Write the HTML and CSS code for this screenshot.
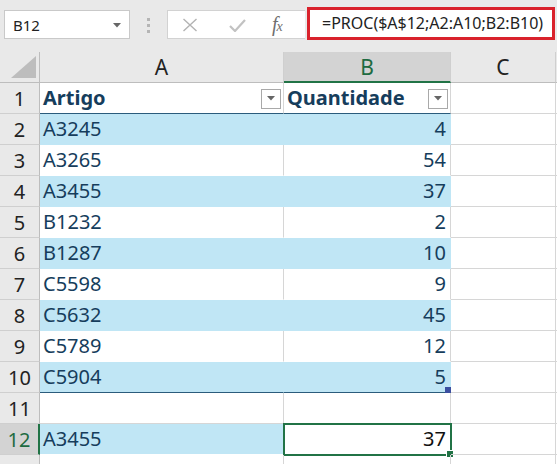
FILE: index.html
```html
<!DOCTYPE html>
<html>
<head>
<meta charset="utf-8">
<link rel="stylesheet" href="styles.css">
</head>
<body>
<div class="toolbar">
  <div class="namebox"><span>B12</span><svg class="nb-arrow" width="8" height="5" viewBox="0 0 8 5"><path d="M0 0h8L4 4.5z" fill="#666"/></svg></div>
  <div class="dots"><i></i><i></i><i></i></div>
  <div class="fxbox">
    <svg class="ic-x" width="16" height="14" viewBox="0 0 16 14"><path d="M1.5 1l13 12M14.5 1l-13 12" stroke="#b3b3b3" stroke-width="1.4" fill="none"/></svg>
    <svg class="ic-ok" width="17" height="13" viewBox="0 0 17 13"><path d="M1 7l5 5L16 1" stroke="#c2c2c2" stroke-width="2.2" fill="none"/></svg>
    <span class="ic-fx">f<span class="fx-x">x</span></span>
  </div>
  <div class="formula">=PROC($A$12;A2:A10;B2:B10)</div>
</div>
<div class="sheet">
  <div class="corner"><svg width="26" height="23" viewBox="0 0 26 23"><path d="M25 0V22H0z" fill="#bdbdbd"/></svg></div>
  <div class="colh">A</div>
  <div class="colh sel">B</div>
  <div class="colh">C</div>
  <div class="colh last"></div>

  <div class="rowh">1</div>
  <div class="cell t th tA">Artigo<span class="dd"><svg width="8" height="5" viewBox="0 0 8 5"><path d="M0 0h8L4 4.5z" fill="#666"/></svg></span></div>
  <div class="cell t th">Quantidade<span class="dd"><svg width="8" height="5" viewBox="0 0 8 5"><path d="M0 0h8L4 4.5z" fill="#666"/></svg></span></div>
  <div class="cell c"></div><div class="cell e"></div>

  <div class="rowh">2</div><div class="cell t b">A3245</div><div class="cell t b n">4</div><div class="cell c"></div><div class="cell e"></div>
  <div class="rowh">3</div><div class="cell t w tA">A3265</div><div class="cell t w n">54</div><div class="cell c"></div><div class="cell e"></div>
  <div class="rowh">4</div><div class="cell t b">A3455</div><div class="cell t b n">37</div><div class="cell c"></div><div class="cell e"></div>
  <div class="rowh">5</div><div class="cell t w tA">B1232</div><div class="cell t w n">2</div><div class="cell c"></div><div class="cell e"></div>
  <div class="rowh">6</div><div class="cell t b">B1287</div><div class="cell t b n">10</div><div class="cell c"></div><div class="cell e"></div>
  <div class="rowh">7</div><div class="cell t w tA">C5598</div><div class="cell t w n">9</div><div class="cell c"></div><div class="cell e"></div>
  <div class="rowh">8</div><div class="cell t b">C5632</div><div class="cell t b n">45</div><div class="cell c"></div><div class="cell e"></div>
  <div class="rowh">9</div><div class="cell t w tA">C5789</div><div class="cell t w n">12</div><div class="cell c"></div><div class="cell e"></div>
  <div class="rowh">10</div><div class="cell t b end">C5904</div><div class="cell t b n end handle">5</div><div class="cell c"></div><div class="cell e"></div>

  <div class="rowh">11</div><div class="cell"></div><div class="cell"></div><div class="cell c"></div><div class="cell e"></div>
  <div class="rowh selr">12</div><div class="cell blue12">A3455</div><div class="cell n active">37</div><div class="cell c"></div><div class="cell e"></div>
  <div class="rowh">13</div><div class="cell"></div><div class="cell"></div><div class="cell c"></div><div class="cell e"></div>
</div>
</body>
</html>
```

FILE: styles.css
```css
* { box-sizing: border-box; }
html, body { margin: 0; padding: 0; background: #fff; overflow: hidden; }
body { width: 557px; height: 464px; font-family: "Noto Sans", "Open Sans", sans-serif; }

.toolbar {
  height: 52px;
  background: #e9e9e9;
  display: flex;
  align-items: flex-start;
}
.namebox {
  margin: 10px 0 0 4px;
  width: 126px;
  height: 29px;
  background: #fff;
  border: 1px solid #c9c9c9;
  display: flex;
  align-items: center;
  justify-content: space-between;
  padding: 0 8px 0 8px;
  font-size: 15px;
  color: #222;
}
.nb-arrow { margin-top: 1px; }
.dots {
  margin: 18px 0 0 17px;
  width: 3px;
  display: flex;
  flex-direction: column;
  gap: 3px;
}
.dots i { display: block; width: 3px; height: 3px; background: #b5b5b5; }
.fxbox {
  margin: 10px 0 0 17px;
  width: 138px;
  height: 29px;
  background: #fff;
  border: 1px solid #d2d2d2;
  border-right: none;
  display: flex;
  align-items: center;
  padding-left: 14px;
}
.ic-x { margin-right: 31px; }
.ic-ok { margin-right: 26px; margin-top: 2px; }
.ic-fx {
  font-family: "Liberation Serif", serif;
  font-style: italic;
  font-size: 20px;
  color: #6f6f6f;
  letter-spacing: -1px;
}
.fx-x { font-size: 14px; }
.formula {
  margin: 7px 0 0 2px;
  width: 248px;
  height: 33px;
  background: #fff;
  border: 3px solid #d9222c;
  padding-left: 12px;
  font-size: 16px;
  line-height: 26px;
  color: #222;
  white-space: nowrap;
}

.sheet {
  display: grid;
  grid-template-columns: 40px 244px 167px 105px 1fr;
  grid-auto-rows: 31px;
}
.corner, .colh, .rowh {
  background: #e9e9e9;
  color: #222;
  font-size: 20px;
  display: flex;
  align-items: center;
  justify-content: center;
}
.corner {
  border-right: 1px solid #bdbdbd;
  border-bottom: 1px solid #bdbdbd;
  align-items: flex-end;
  justify-content: flex-end;
  padding: 0 2px 3px 0;
}
.colh {
  border-right: 1px solid #cfcfcf;
  border-bottom: 1px solid #bdbdbd;
  font-size: 21px;
}
.colh.sel {
  background: #d3d3d3;
  color: #1e6b41;
  border-bottom: 2px solid #217346;
}
.colh.last { border-right: none; }
.rowh {
  border-right: 1px solid #bdbdbd;
  border-bottom: 1px solid #cfcfcf;
  font-size: 20px;
}
.rowh.selr {
  background: #d3d3d3;
  color: #1e6b41;
  border-right: 2px solid #217346;
}

.cell {
  position: relative;
  border-right: 1px solid #d6d6d6;
  border-bottom: 1px solid #d6d6d6;
  font-size: 20px;
  line-height: 30px;
  padding: 0 4px 0 3px;
  color: #111;
  white-space: nowrap;
}
.cell.e { border-right: none; }
.cell.n { text-align: right; }
.cell.t { color: #163d5c; border-bottom-color: transparent; }
.cell.t.b { background: #c0e6f5; border-right-color: #c0e6f5; border-bottom-color: #c0e6f5; }
.cell.t.w { background: #fff; border-bottom-color: #fff; }
.cell.th {
  font-weight: 700;
  border-bottom: 1px solid #2b5c7c;
  display: flex;
  align-items: center;
  justify-content: space-between;
  padding-right: 2px;
}
.cell.th.tA { border-right-color: #d6d6d6; }
.cell.th:not(.tA) { border-right-color: #d6d6d6; }
.cell.t.end { border-bottom: 1px solid #2b5c7c; }
.dd {
  width: 20px;
  height: 20px;
  border: 1px solid #a9a9a9;
  background: #fff;
  display: flex;
  align-items: center;
  justify-content: center;
  margin-top: 1px;
}
.handle::after {
  content: "";
  position: absolute;
  right: -1px;
  bottom: -1px;
  width: 6px;
  height: 6px;
  background: #3b4fa0;
}
.cell.blue12 { background: #c0e6f5; color: #163d5c; border-right: none; border-bottom-color: #fff; }
.cell.active { color: #111; }
.cell.active::before {
  content: "";
  position: absolute;
  left: -1px;
  top: -1px;
  right: -2px;
  bottom: -2px;
  border: 2px solid #217346;
}
.cell.active::after {
  content: "";
  position: absolute;
  right: -4px;
  bottom: -4px;
  width: 6px;
  height: 6px;
  background: #217346;
  border: 1px solid #fff;
}
```
